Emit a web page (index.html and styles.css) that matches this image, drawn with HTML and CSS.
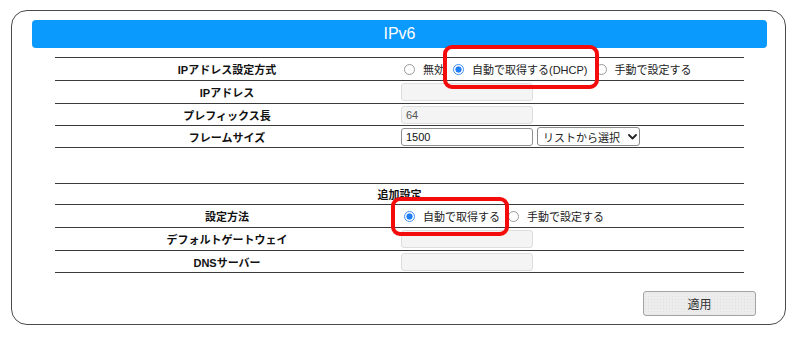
FILE: index.html
```html
<!DOCTYPE html>
<html lang="ja">
<head>
<meta charset="utf-8">
<title>IPv6</title>
<link rel="stylesheet" href="styles.css">
</head>
<body>
<div class="panel">
  <div class="header">IPv6</div>
  <div class="grid">
    <div class="row h23">
      <div class="label">IPアドレス設定方式</div>
      <div class="value">
        <span class="radio"></span><span class="opt">無効</span>
        <span class="radio on"></span><span class="opt">自動で取得する(DHCP)</span>
        <span class="radio"></span><span class="opt">手動で設定する</span>
      </div>
    </div>
    <div class="row h23">
      <div class="label">IPアドレス</div>
      <div class="value"><span class="input dis"></span></div>
    </div>
    <div class="row h22">
      <div class="label">プレフィックス長</div>
      <div class="value"><span class="input dis">64</span></div>
    </div>
    <div class="row h22">
      <div class="label">フレームサイズ</div>
      <div class="value">
        <span class="input">1500</span>
        <span class="select">リストから選択<svg class="chev" width="9" height="6" viewBox="0 0 9 6"><path d="M1 1 L4.5 4.5 L8 1" fill="none" stroke="#222" stroke-width="1.8" stroke-linecap="round" stroke-linejoin="round"/></svg></span>
      </div>
    </div>
    <div class="row h36"></div>
    <div class="row h21">
      <div class="full">追加設定</div>
    </div>
    <div class="row h23">
      <div class="label">設定方法</div>
      <div class="value">
        <span class="radio on"></span><span class="opt">自動で取得する</span>
        <span class="radio"></span><span class="opt">手動で設定する</span>
      </div>
    </div>
    <div class="row h23">
      <div class="label">デフォルトゲートウェイ</div>
      <div class="value"><span class="input dis"></span></div>
    </div>
    <div class="row h22">
      <div class="label">DNSサーバー</div>
      <div class="value"><span class="input dis"></span></div>
    </div>
  </div>
  <div class="actions"><span class="button">適用</span></div>
  <div class="mark mark1"></div>
  <div class="mark mark2"></div>
</div>
</body>
</html>
```
FILE: styles.css
```css
* { box-sizing: border-box; }
html, body { margin: 0; padding: 0; background: #fff; }
body {
  font-family: "Liberation Sans", "Noto Sans CJK JP", sans-serif;
  font-size: 11px;
  color: #222;
}
.panel {
  position: relative;
  margin: 10px 0 0 11px;
  width: 775px;
  height: 315px;
  border: 1px solid #4a4a4a;
  border-radius: 16px;
  padding: 9px 18px 0 20px;
}
.header {
  height: 28px;
  background: #0a99fc;
  border-radius: 4px;
  color: #fff;
  font-size: 16px;
  display: flex;
  align-items: center;
  justify-content: center;
}
.grid {
  margin: 9px 23px 0 23px;
  border-top: 1px solid #3a3a3a;
}
.row {
  display: flex;
  align-items: center;
  border-bottom: 1px solid #3a3a3a;
}
.h21 { height: 21px; }
.h22 { height: 22px; }
.h23 { height: 23px; }
.h36 { height: 36px; }
.label {
  width: 344px;
  text-align: center;
  font-weight: bold;
  color: #111;
}
.full {
  width: 100%;
  text-align: center;
  font-weight: bold;
  color: #111;
}
.value {
  flex: 1;
  display: flex;
  align-items: center;
  padding-left: 2px;
  color: #222;
  white-space: nowrap;
}
.radio {
  width: 11px;
  height: 11px;
  border-radius: 50%;
  border: 1px solid #9a9a9a;
  background: #fff;
  margin: 0 8px 0 3px;
  flex: none;
}
.radio.on {
  border-color: #3f8ff5;
  background: radial-gradient(circle, #1f7df6 0 2.8px, #fff 3.4px);
}
.opt { margin-right: 5px; }
.input {
  display: inline-flex;
  align-items: center;
  width: 132px;
  height: 18px;
  border: 1px solid #8f8f8f;
  border-radius: 3px;
  padding-left: 4px;
  background: #fff;
  color: #111;
}
.input.dis {
  background: #f4f4f4;
  border-color: #dedede;
  color: #555;
}
.select {
  display: inline-flex;
  align-items: center;
  margin-left: 4px;
  width: 103px;
  height: 19px;
  border: 1px solid #8a8a8a;
  border-radius: 3px;
  padding-left: 5px;
  font-size: 11px;
  color: #222;
  background: #fff;
  white-space: nowrap;
}
.chev { margin-left: 8px; flex: none; }
.actions {
  display: flex;
  justify-content: flex-end;
  margin: 18px 11px 0 0;
}
.button {
  width: 113px;
  height: 25px;
  border: 1px solid #a3a3a3;
  border-radius: 3px;
  background-color: #ececec;
  background-image: radial-gradient(circle, #e0e0e0 0.6px, transparent 0.8px);
  background-size: 3px 3px;
  display: flex;
  align-items: center;
  justify-content: center;
  font-size: 12px;
  color: #333;
}
.mark {
  position: absolute;
  border: 4px solid #f40b0b;
  border-radius: 9px;
}
.mark1 { left: 431px; top: 34px; width: 156px; height: 44px; }
.mark2 { left: 379px; top: 186px; width: 118px; height: 39px; }
```
